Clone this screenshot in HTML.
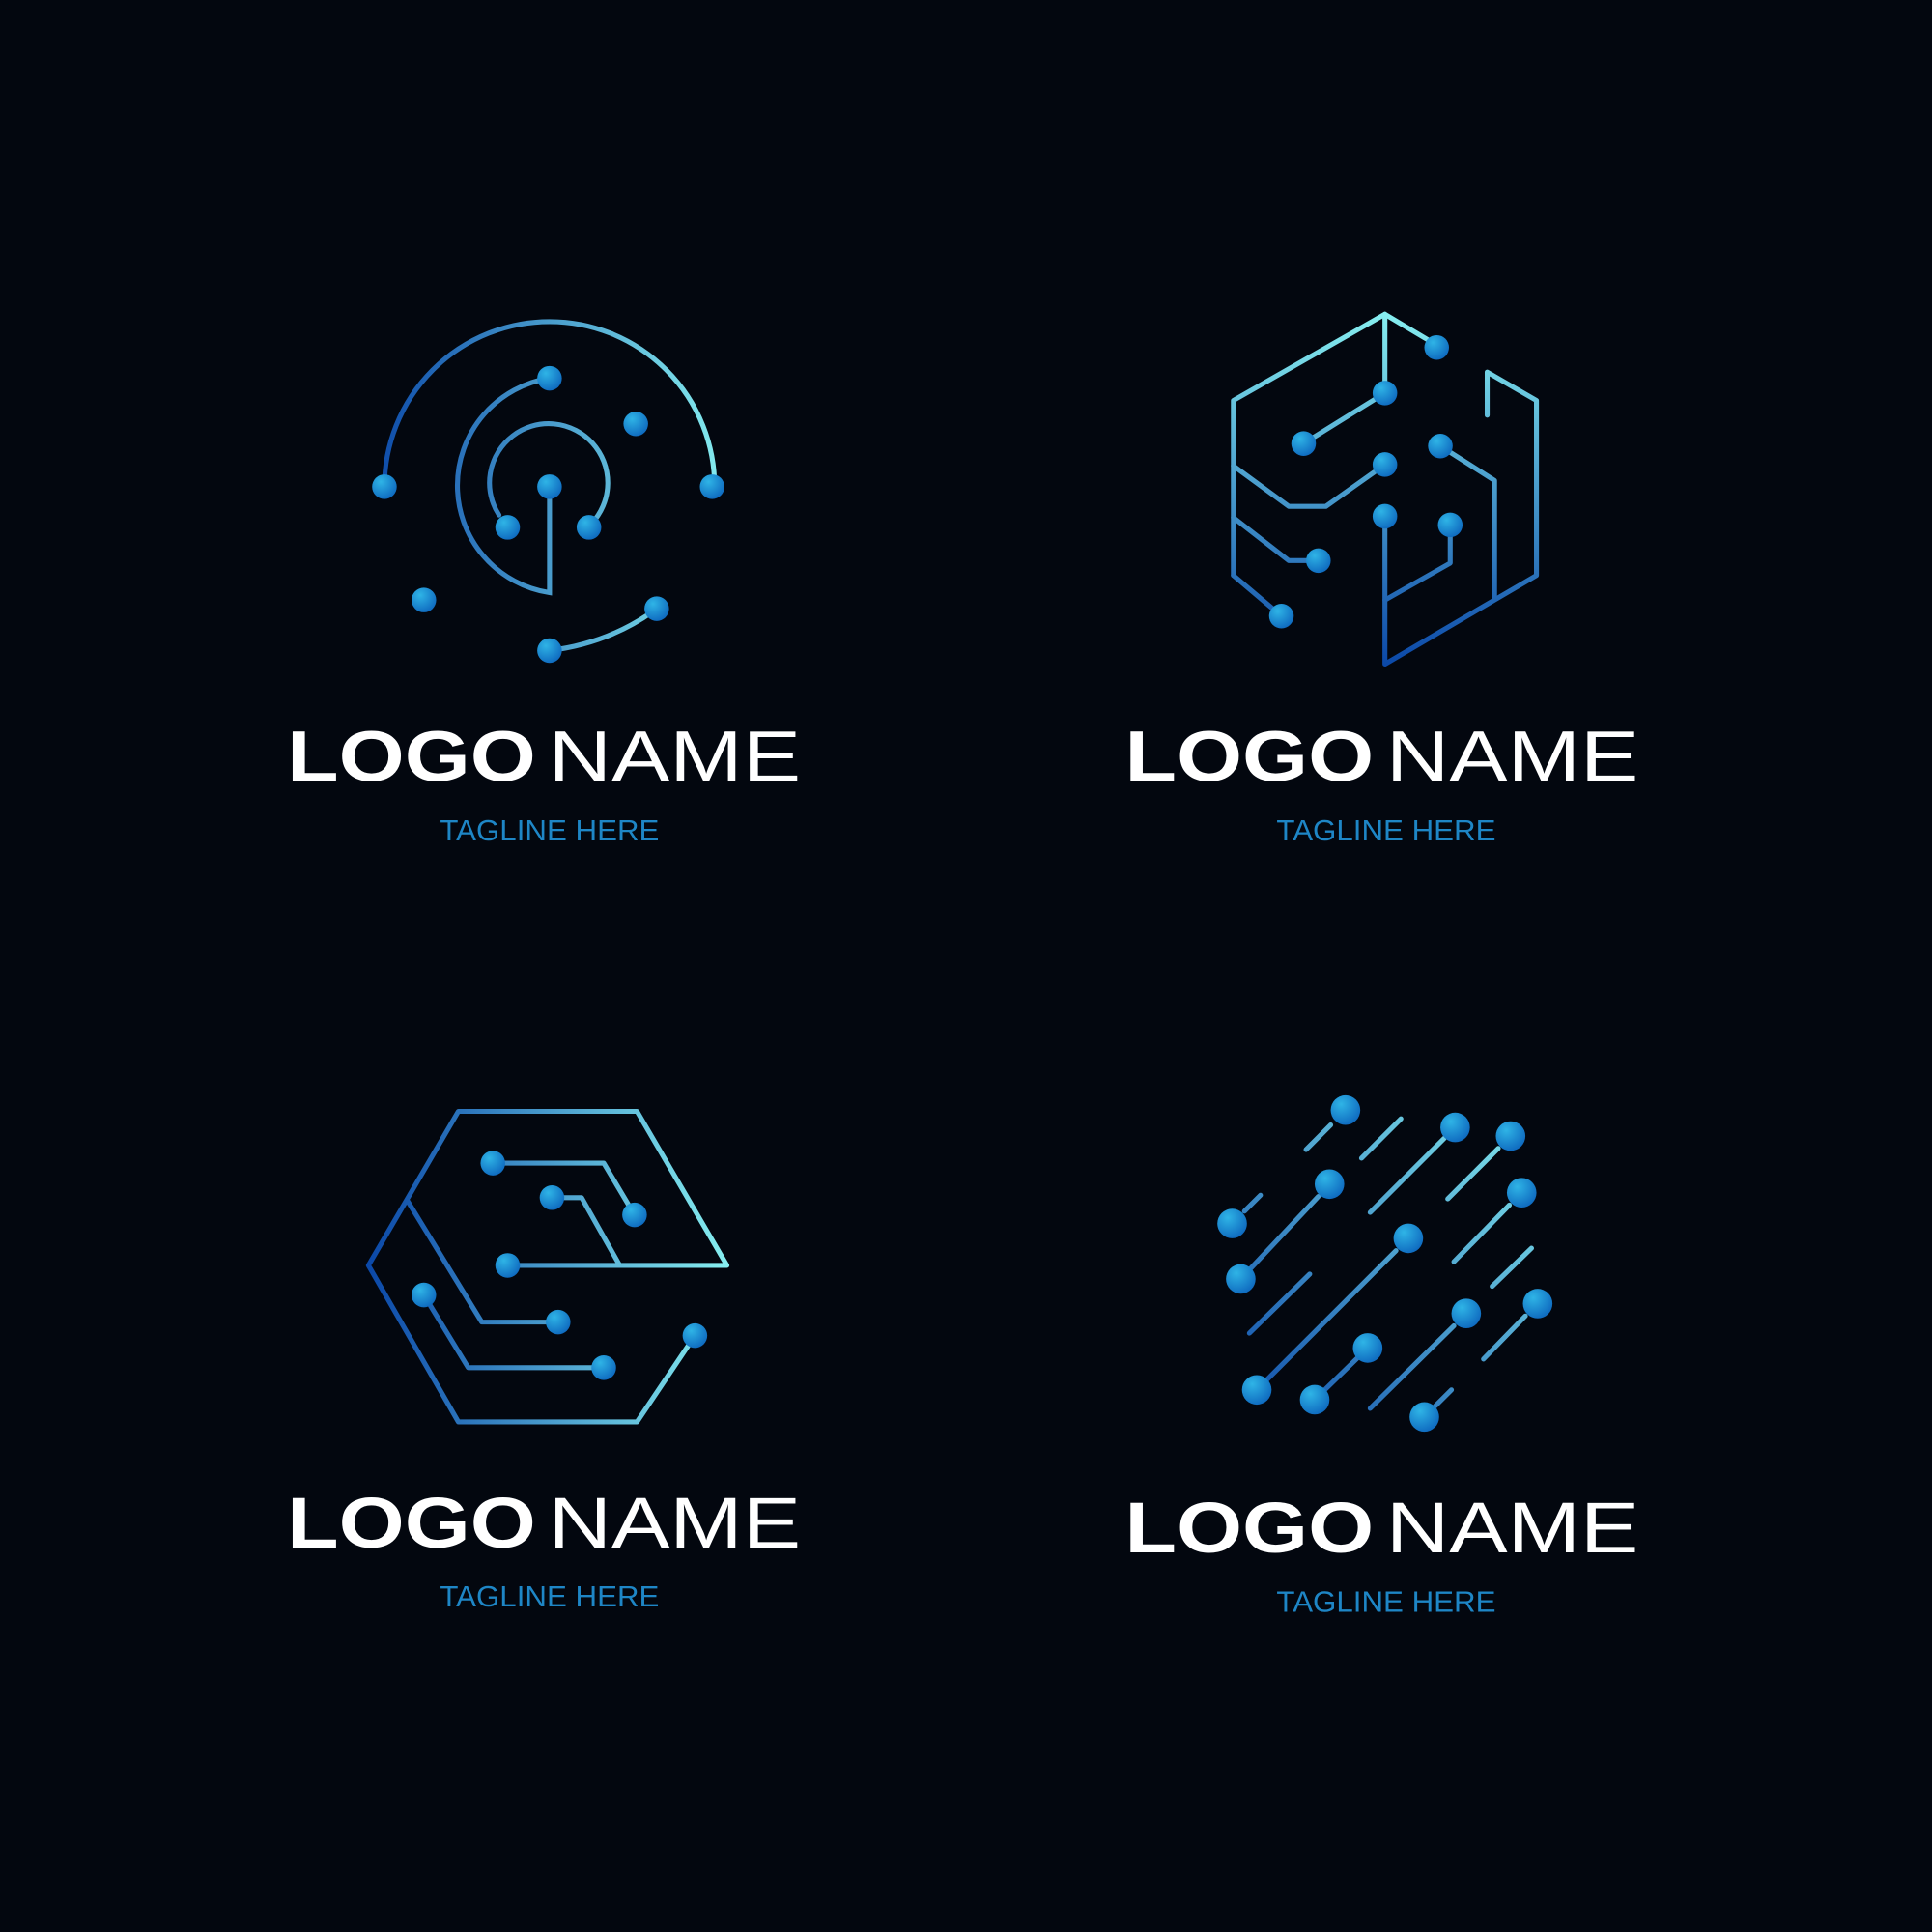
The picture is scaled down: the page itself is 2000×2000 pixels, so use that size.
<!DOCTYPE html>
<html><head><meta charset="utf-8"><style>
html,body{margin:0;padding:0;background:#03070f;}
svg{display:block}
</style></head><body>
<svg width="2000" height="2000" viewBox="0 0 1568 1568" xmlns="http://www.w3.org/2000/svg">
<defs>
<linearGradient id="g1" gradientUnits="userSpaceOnUse" x1="300" y1="400" x2="590" y2="400"><stop offset="0" stop-color="#0b48a8"/><stop offset="1" stop-color="#86eef0"/></linearGradient>
<linearGradient id="g2" gradientUnits="userSpaceOnUse" x1="1124" y1="540" x2="1124" y2="255"><stop offset="0" stop-color="#0b48a8"/><stop offset="1" stop-color="#86eef0"/></linearGradient>
<linearGradient id="g3" gradientUnits="userSpaceOnUse" x1="299" y1="1027" x2="590" y2="1027"><stop offset="0" stop-color="#0b48a8"/><stop offset="1" stop-color="#86eef0"/></linearGradient>
<linearGradient id="g4" gradientUnits="userSpaceOnUse" x1="1000" y1="1150" x2="1250" y2="900"><stop offset="0" stop-color="#0b48a8"/><stop offset="1" stop-color="#86eef0"/></linearGradient>
<radialGradient id="d" cx="0.35" cy="0.3" r="0.8"><stop offset="0" stop-color="#2fb4e6"/><stop offset="1" stop-color="#0c64bc"/></radialGradient>
</defs>
<rect width="1568" height="1568" fill="#03070f"/>

<!-- Logo 1 -->
<g fill="none" stroke="url(#g1)" stroke-width="4" stroke-linecap="round">
<path d="M312 395 A134 134 0 0 1 580 395"/>
<path d="M446 307 A88 88 0 0 0 446 481 L446 395"/>
<path d="M405 418 A48 48 0 1 1 480 425"/>
<path d="M446 528 Q495 522 533 494"/>
</g>
<g fill="url(#d)">
<circle cx="446" cy="307" r="10"/><circle cx="516" cy="344" r="10"/><circle cx="312" cy="395" r="10"/><circle cx="578" cy="395" r="10"/><circle cx="446" cy="395" r="10"/><circle cx="412" cy="428" r="10"/><circle cx="478" cy="428" r="10"/><circle cx="344" cy="487" r="10"/><circle cx="533" cy="494" r="10"/><circle cx="446" cy="528" r="10"/>
</g>

<!-- Logo 2 -->
<g fill="none" stroke="url(#g2)" stroke-width="4" stroke-linecap="round" stroke-linejoin="round">
<path d="M1001 467 L1001 325 L1124 255 L1166 280"/>
<path d="M1124 255 L1124 319 L1058 360"/>
<path d="M1001 378 L1046 411 L1076 411 L1124 377"/>
<path d="M1001 420 L1046 455 L1070 455"/>
<path d="M1001 467 L1040 500"/>
<path d="M1124 419 L1124 539 L1247 467 L1247 325 L1207 302 L1207 337"/>
<path d="M1124 487 L1177 457 L1177 426"/>
<path d="M1169 362 L1213 390 L1213 485"/>
</g>
<g fill="url(#d)">
<circle cx="1166" cy="282" r="10"/><circle cx="1124" cy="319" r="10"/><circle cx="1058" cy="360" r="10"/><circle cx="1124" cy="377" r="10"/><circle cx="1169" cy="362" r="10"/><circle cx="1124" cy="419" r="10"/><circle cx="1177" cy="426" r="10"/><circle cx="1070" cy="455" r="10"/><circle cx="1040" cy="500" r="10"/>
</g>

<!-- Logo 3 -->
<g fill="none" stroke="url(#g3)" stroke-width="4" stroke-linecap="round" stroke-linejoin="round">
<path d="M564 1084 L517 1154 L372 1154 L299 1027 L372 902 L517 902 L590 1027 L412 1027"/>
<path d="M331 975 L391 1073 L453 1073"/>
<path d="M344 1051 L380 1110 L490 1110"/>
<path d="M400 944 L490 944 L515 986"/>
<path d="M448 972 L472 972 L503 1027"/>
</g>
<g fill="url(#d)">
<circle cx="400" cy="944" r="10"/><circle cx="448" cy="972" r="10"/><circle cx="515" cy="986" r="10"/><circle cx="412" cy="1027" r="10"/><circle cx="344" cy="1051" r="10"/><circle cx="453" cy="1073" r="10"/><circle cx="490" cy="1110" r="10"/><circle cx="564" cy="1084" r="10"/>
</g>

<!-- Logo 4 -->
<g fill="none" stroke="url(#g4)" stroke-width="4" stroke-linecap="round">
<path d="M1060 933 L1080 913"/><path d="M1105 940 L1137 908"/><path d="M1112 984 L1172 924"/><path d="M1175 973 L1216 932"/><path d="M1010 983 L1023 970"/><path d="M1007 1038 L1070 971"/><path d="M1180 1024 L1225 978"/><path d="M1211 1044 L1243 1013"/><path d="M1014 1082 L1063 1034"/><path d="M1020 1128 L1133 1015"/><path d="M1204 1103 L1238 1068"/><path d="M1112 1143 L1180 1076"/><path d="M1067 1136 L1110 1094"/><path d="M1165 1141 L1178 1128"/>
</g>
<g fill="url(#d)">
<circle cx="1092" cy="901" r="12"/><circle cx="1181" cy="915" r="12"/><circle cx="1226" cy="922" r="12"/><circle cx="1000" cy="993" r="12"/><circle cx="1079" cy="961" r="12"/><circle cx="1007" cy="1038" r="12"/><circle cx="1235" cy="968" r="12"/><circle cx="1143" cy="1005" r="12"/><circle cx="1020" cy="1128" r="12"/><circle cx="1248" cy="1058" r="12"/><circle cx="1190" cy="1066" r="12"/><circle cx="1110" cy="1094" r="12"/><circle cx="1067" cy="1136" r="12"/><circle cx="1156" cy="1150" r="12"/>
</g>

<!-- Texts -->
<g font-family="Liberation Sans, sans-serif" fill="#ffffff" font-size="58">
<text x="233" y="634" font-weight="700" textLength="202" lengthAdjust="spacingAndGlyphs">LOGO</text>
<text x="445" y="634" font-weight="400" textLength="205" lengthAdjust="spacingAndGlyphs">NAME</text>
<text x="913" y="634" font-weight="700" textLength="202" lengthAdjust="spacingAndGlyphs">LOGO</text>
<text x="1125" y="634" font-weight="400" textLength="205" lengthAdjust="spacingAndGlyphs">NAME</text>
<text x="233" y="1256" font-weight="700" textLength="202" lengthAdjust="spacingAndGlyphs">LOGO</text>
<text x="445" y="1256" font-weight="400" textLength="205" lengthAdjust="spacingAndGlyphs">NAME</text>
<text x="913" y="1260" font-weight="700" textLength="202" lengthAdjust="spacingAndGlyphs">LOGO</text>
<text x="1125" y="1260" font-weight="400" textLength="205" lengthAdjust="spacingAndGlyphs">NAME</text>
</g>
<g font-family="Liberation Sans, sans-serif" fill="#1e86c6" font-size="24">
<text x="357" y="682" textLength="178" lengthAdjust="spacingAndGlyphs">TAGLINE HERE</text>
<text x="1036" y="682" textLength="178" lengthAdjust="spacingAndGlyphs">TAGLINE HERE</text>
<text x="357" y="1304" textLength="178" lengthAdjust="spacingAndGlyphs">TAGLINE HERE</text>
<text x="1036" y="1308" textLength="178" lengthAdjust="spacingAndGlyphs">TAGLINE HERE</text>
</g>
</svg>
</body></html>
